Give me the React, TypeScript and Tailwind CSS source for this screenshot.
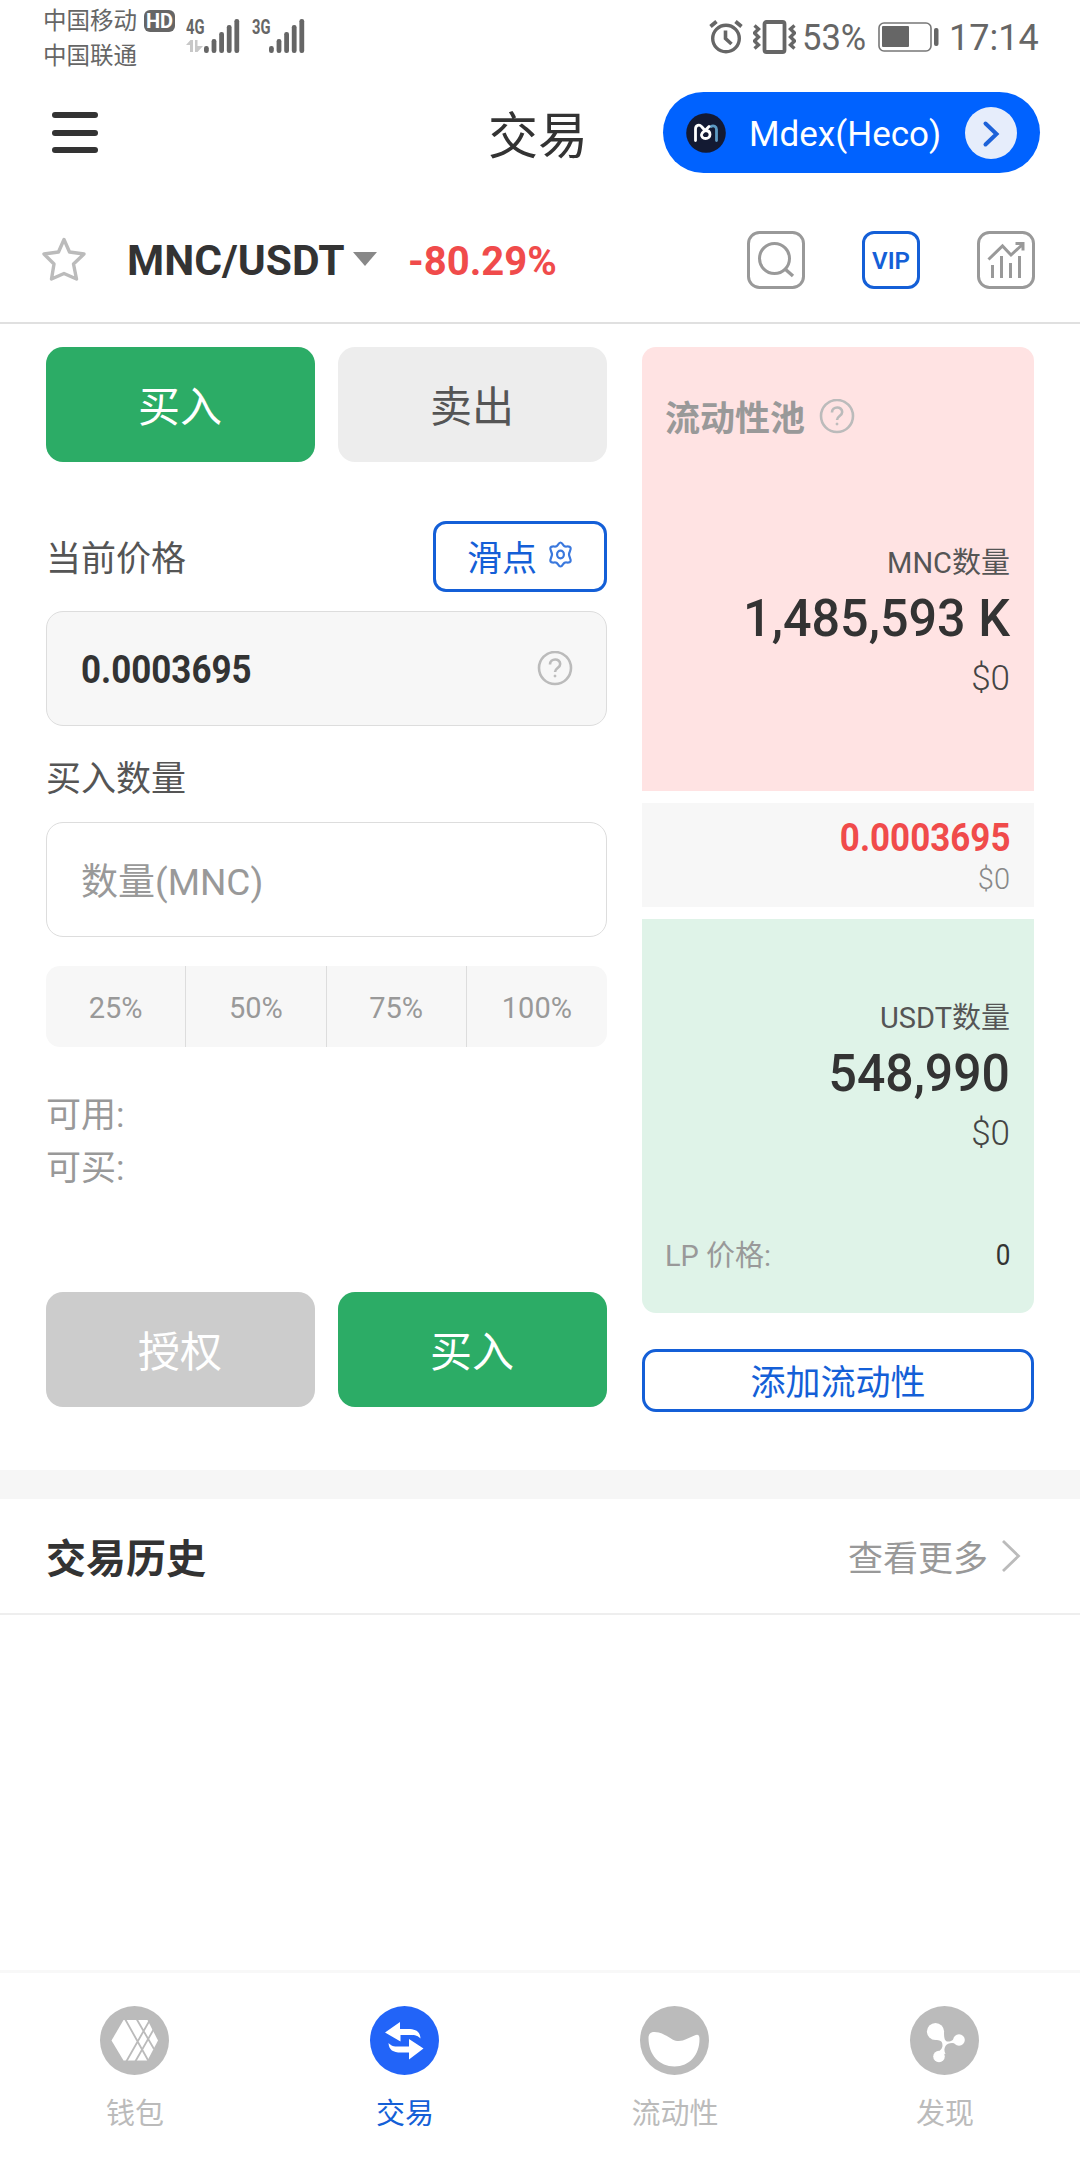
import React from "react";

function Signal() {
  return (
    <svg className="block" width="36" height="34" viewBox="0 0 36 34" fill="#666">
      <rect x="0" y="27" width="4.8" height="7" rx="2.2" />
      <rect x="7.6" y="20" width="4.8" height="14" rx="2.2" />
      <rect x="15.2" y="13" width="4.8" height="21" rx="2.2" />
      <rect x="22.8" y="6" width="4.8" height="28" rx="2.2" />
      <rect x="30.4" y="0" width="4.8" height="34" rx="2.2" />
    </svg>
  );
}

function StatusBar() {
  return (
    <div className="flex h-[72px] items-start pl-[43px] text-[#666]">
      <div className="w-[101px] pt-[4px] text-[23.5px] leading-[35px]">
        <div>中国移动</div>
        <div>中国联通</div>
      </div>
      <div className="mt-[10px] flex h-[22px] w-[31px] items-center justify-center rounded-[6px] bg-[#666] text-[20px] font-bold leading-none text-white">
        HD
      </div>
      <div className="ml-[11px] mt-[17px] w-[18px]">
        <div className="h-[22px] w-[26px] origin-left scale-x-[0.7] text-[21px] font-bold leading-[20px]">4G</div>
        <svg className="block" width="17" height="14" viewBox="0 0 17 14" fill="#c8c8c8">
          <path d="M0 6 4.500 1H7v12H4V6zM9 1h2.500v6H17l-5.500 6H9z" />
        </svg>
      </div>
      <div className="mt-[19px]"><Signal /></div>
      <div className="ml-[12px] mt-[17px] w-[17px]">
        <div className="w-[26px] origin-left scale-x-[0.7] text-[21px] font-bold leading-[20px]">3G</div>
      </div>
      <div className="mt-[19px]"><Signal /></div>
      <svg className="ml-[404px] mt-[19px] shrink-0" width="34" height="36" viewBox="0 0 34 36" fill="none" stroke="#666" strokeWidth="3.400">
        <circle cx="17" cy="19.500" r="13.300" />
        <path d="M16.500 11.500v8l6 5.500" strokeWidth="3.600" />
        <path d="M1.500 7.500l6-5M32.500 7.500l-6-5" strokeWidth="3.800" />
      </svg>
      <svg className="ml-[10px] mt-[19px] shrink-0" width="43" height="36" viewBox="0 0 43 36" fill="none" stroke="#666">
        <rect x="11.500" y="3" width="20" height="30" rx="2" strokeWidth="3.800" />
        <path d="M1.500 6.500l4 3.500-4 4 4 4-4 4 4 4-4 3.500M41.500 6.500l-4 3.500 4 4-4 4 4 4-4 4 4 3.500" strokeWidth="3.400" />
      </svg>
      <div className="ml-[6px] mt-[18px] w-[76px] text-[36px] leading-[40px]">
        <span className="inline-block origin-left scale-x-[0.96]">53%</span>
      </div>
      <svg className="mt-[22px] shrink-0" width="62" height="30" viewBox="0 0 62 30">
        <rect x="1" y="1" width="52" height="28" rx="5" fill="none" stroke="#777" strokeWidth="1.600" />
        <rect x="4" y="4" width="27" height="21" rx="1" fill="#666" />
        <rect x="56" y="6" width="4.500" height="18" rx="2" fill="#666" />
      </svg>
      <div className="ml-[9px] mt-[18px] text-[36px] leading-[40px]">17:14</div>
    </div>
  );
}

function Header() {
  return (
    <div className="flex h-[120px] items-start text-[#333]">
      <div className="ml-[52px] mt-10 flex w-[46px] flex-col gap-[11.500px]">
        <div className="h-[6px] rounded-full bg-[#333]" />
        <div className="h-[6px] rounded-full bg-[#333]" />
        <div className="h-[6px] rounded-full bg-[#333]" />
      </div>
      <div className="ml-[390px] mt-[35px] w-[175px] text-[50px] leading-[60px]">交易</div>
      <div className="mt-[20px] flex h-[81px] w-[377px] items-center rounded-full bg-[#0062ff]">
        <svg className="ml-[23px]" width="40" height="40" viewBox="0 0 40 40" fill="none" strokeWidth="2.800" strokeLinecap="round">
          <circle cx="20" cy="20" r="19.800" fill="#131a33" />
          <path d="M25 13.500c2.500-1.500 5.500 0 5.500 3v11" stroke="#5d9bc4" />
          <path d="M9.500 27.500V16c0-4 4-5 6-2.500l3.500 4" stroke="#fff" />
          <path d="M19 17.500c3 0 5 1.500 5 4s-2 4-4.500 4-4.500-2-4-4 3-3.500 5-5.500l2.500-2.500" stroke="#fff" />
        </svg>
        <div className="ml-[23px] w-[193px] pt-[4px] text-[35px] leading-[44px] text-white">Mdex(Heco)</div>
        <svg className="ml-[23px]" width="52" height="52" viewBox="0 0 52 52" fill="none">
          <circle cx="26" cy="26" r="26" fill="#e6edfb" />
          <path d="M20.500 16.500l11 10.500-11 10.500" stroke="#1d62d9" strokeWidth="4" strokeLinecap="round" />
        </svg>
      </div>
    </div>
  );
}

function PairBar() {
  return (
    <div className="flex h-[132px] items-start border-b-2 border-[#e0e0e0]">
      <svg className="ml-[41px] mt-[44px]" width="46" height="46" viewBox="0 0 46 46" fill="none" stroke="#bbb" strokeWidth="3.400" strokeLinejoin="round">
        <path d="M23 3.500l5.500 12.500 14.500 2-10.500 10 3 15L23 37.500l-12.500 5.500 2.500-15L3 18l14.500-2z" />
      </svg>
      <div className="ml-[40px] mt-[44px] w-[226px] whitespace-nowrap text-[42px] font-bold leading-[50px] text-[#333]">
        <span className="inline-block origin-left scale-x-[1.012]">MNC/USDT</span>
      </div>
      <svg className="mt-[60px]" width="24" height="14" viewBox="0 0 24 14" fill="#888"><path d="M0 0h24L12 14z" /></svg>
      <div className="ml-[31px] mt-[45px] w-[339px] text-[40px] font-bold leading-[50px] text-[#f04b4b]">
        <span className="inline-block origin-left">-80.29%</span>
      </div>
      <svg className="mt-[39px] shrink-0" width="58" height="58" viewBox="0 0 58 58" fill="none" stroke="#999" strokeWidth="3">
        <rect x="1.500" y="1.500" width="55" height="55" rx="11" />
        <circle cx="27.500" cy="27.500" r="15" />
        <path d="M38 38l8 7" strokeWidth="3.400" />
      </svg>
      <div className="ml-[57px] mt-[39px] flex h-[58px] w-[58px] shrink-0 items-center justify-center rounded-[12px] border-[3px] border-[#145fd7] pt-px text-[24px] font-semibold text-[#145fd7]">
        VIP
      </div>
      <svg className="ml-[57px] mt-[39px] shrink-0" width="58" height="58" viewBox="0 0 58 58" fill="none" stroke="#999" strokeWidth="3">
        <rect x="1.500" y="1.500" width="55" height="55" rx="11" />
        <path d="M11.500 28.500L25.500 15l8.500 9L46 13M38.500 12.500H46v7" />
        <path d="M15.500 34v13M24.500 25v22M33.500 32v15M42.500 25v22" />
      </svg>
    </div>
  );
}

function Help({ cls, color }: { cls: string; color: string }) {
  return (
    <svg className={cls} width="36" height="36" viewBox="0 0 36 36" fill="none" stroke={color} strokeWidth="2.600">
      <circle cx="18" cy="17" r="16" />
      <path d="M13 13.500c0-6.500 10.200-6.500 10.200-.5 0 4-5.200 4-5.200 8" />
      <circle cx="18" cy="25" r="1" fill={color} strokeWidth="1" />
    </svg>
  );
}

function BigButton({ label, cls }: { label: string; cls: string }) {
  return (
    <button className={"flex h-[115px] w-[269px] items-center justify-center rounded-[17px] pt-[6px] pr-px text-[42px] " + cls}>
      <span className="leading-[60px]">{label}</span>
    </button>
  );
}

function OrderForm() {
  return (
    <div className="w-[561px]">
      <div className="flex justify-between">
        <BigButton label="买入" cls="bg-[#2cac66] text-white" />
        <BigButton label="卖出" cls="bg-[#ededed] text-[#555]" />
      </div>
      <div className="mt-[59px] flex h-[71px] items-center justify-between">
        <div className="pt-[7px] text-[35px] leading-[50px] text-[#555]">当前价格</div>
        <div className="flex h-[71px] w-[174px] items-center rounded-[13px] border-[3px] border-[#145fd7] pl-[31px] text-[35px] leading-[50px] text-[#145fd7]">
          <span className="pt-[7px]">滑点</span>
          <svg className="mb-[3px] ml-[11px]" width="25" height="28" viewBox="0 0 25 28" fill="none" stroke="#3a78dd" strokeWidth="2.200" strokeLinejoin="round">
            <path d="M12.500 1.500c2 0 2.500 3 4 3.800s5-.8 6 1.200-1.500 4.500-1.500 7 2.500 5 1.500 7-4.500.4-6 1.200-2 3.800-4 3.800-2.500-3-4-3.800-5 .8-6-1.200 1.500-4.500 1.500-7-2.500-5-1.500-7 4.500-.4 6-1.200 2-3.800 4-3.800z" />
            <ellipse cx="12.500" cy="13.500" rx="3.400" ry="3.800" />
          </svg>
        </div>
      </div>
      <div className="mt-[19px] flex h-[115px] items-center justify-between rounded-[17px] border border-[#ddd] bg-[#f7f7f7] pl-[34px] pr-[33px]">
        <div className="pt-[2px] text-[38px] font-bold leading-[50px] text-[#333]">
          <span className="inline-block origin-left scale-x-[0.92]">0.0003695</span>
        </div>
        <Help cls="" color="#bbb" />
      </div>
      <div className="mt-[29px] text-[35px] leading-[50px] text-[#555]">买入数量</div>
      <div className="mt-[17px] flex h-[115px] items-center rounded-[17px] border border-[#ddd] pl-[34px] pt-[6px] text-[37px] leading-[50px] text-[#999]">
        数量(MNC)
      </div>
      <div className="mt-[29px] grid h-[81px] grid-cols-4 divide-x divide-[#ddd] overflow-hidden rounded-[14px] bg-[#f7f7f7] text-[29px] text-[#999]">
        {["25%", "50%", "75%", "100%"].map((p) => (
          <div key={p} className="flex items-center justify-center pt-1">{p}</div>
        ))}
      </div>
      <div className="mt-[42px] text-[35px] leading-[53px] text-[#999]">
        <div>可用:</div>
        <div>可买:</div>
      </div>
      <div className="mt-[97px] flex justify-between">
        <BigButton label="授权" cls="bg-[#ccc] text-white" />
        <BigButton label="买入" cls="bg-[#2cac66] text-white" />
      </div>
    </div>
  );
}

function Pool() {
  return (
    <div className="ml-[35px] w-[392px] text-right">
      <div className="h-[444px] rounded-t-[14px] bg-[#ffe3e3] px-6 pt-[44px]">
        <div className="-ml-px flex h-[52px] items-center text-[35px] font-bold leading-[50px] text-[#999]">
          <span className="pt-[5px]">流动性池</span>
          <Help cls="ml-[14px]" color="#bbb" />
        </div>
        <div className="mt-[100px] text-[29px] leading-[40px] text-[#555]">MNC数量</div>
        <div className="mt-[5px] h-[62px] text-[52px] font-medium leading-[62px] text-[#333]">
          <span className="inline-block origin-right scale-x-[0.967] whitespace-nowrap">1,485,593 K</span>
        </div>
        <div className="mt-[7px] text-[35px] font-light leading-[44px] text-[#444]">$0</div>
      </div>
      <div className="mt-[12px] h-[104px] bg-[#f7f7f7] px-6 pt-[12px]">
        <div className="text-[38px] font-bold leading-[46px] text-[#f04b4b]">
          <span className="inline-block origin-right scale-x-[0.92]">0.0003695</span>
        </div>
        <div className="text-[29px] font-light leading-[36px] text-[#888]">$0</div>
      </div>
      <div className="mt-[12px] h-[394px] rounded-b-[14px] bg-[#dff3e8] px-6 pt-[79px]">
        <div className="text-[29px] leading-[40px] text-[#555]">USDT数量</div>
        <div className="mt-[5px] h-[62px] text-[52px] font-medium leading-[62px] text-[#333]">
          <span className="inline-block origin-right scale-x-[0.96]">548,990</span>
        </div>
        <div className="mt-[7px] text-[35px] font-light leading-[44px] text-[#444]">$0</div>
        <div className="-ml-px mt-[80px] flex justify-between text-[29px] leading-[40px]">
          <div className="text-[#999]">LP 价格:</div>
          <div className="origin-right scale-x-[0.9] text-[29px] leading-[38px] text-[#333]">0</div>
        </div>
      </div>
      <div className="mt-[36px] flex h-[63px] items-center justify-center rounded-[14px] border-[3px] border-[#145fd7] pt-[6px] text-[35px] leading-[50px] text-[#145fd7]">
        添加流动性
      </div>
    </div>
  );
}

function TabItem({ label, active, children }: { label: string; active?: boolean; children: React.ReactNode }) {
  return (
    <div className="flex flex-col items-center pt-[33px]">
      <svg width="70" height="70" viewBox="0 0 70 70">
        <circle cx="34.500" cy="34.500" r="34.500" fill={active ? "#2264f8" : "#bbb"} />
        {children}
      </svg>
      <div className={active ? "mt-[18px] text-[29px] leading-[40px] text-[#145fd7]" : "mt-[18px] text-[29px] leading-[40px] text-[#bbb]"}>
        {label}
      </div>
    </div>
  );
}

function TabBar() {
  return (
    <div className="grid h-[190px] grid-cols-4 border-t-[3px] border-[#f8f8f8]">
      <TabItem label="钱包">
        <path d="M23.500 14h24l10.500 20.500-10.500 20h-24L11.500 34.500z" fill="#fff" />
        <path d="M24.500 12l24 43M36 12l18 31M51 12L26 56M55 21L35 56" stroke="#bbb" strokeWidth="1.800" />
      </TabItem>
      <TabItem label="交易" active>
        <path d="M15 26.500L30 16v7h8c8 0 12 2.500 12.500 9.500-3-3-5-3.500-10-3.500H30.500v6.500z" fill="#fff" />
        <path d="M53.500 42.500L39 53.500v-7h-8c-8 0-12-2.500-12.500-9.500 3 3 5 3.500 10 3.500H39V33z" fill="#fff" />
      </TabItem>
      <TabItem label="流动性">
        <path d="M8.500 32c0-4 2-6 6-6 7 0 13 4.500 18 7.500 5 2.500 10 1.500 14-.5l8-3.500c3.500-1.500 5-.5 5 3.500 0 16-10 27.500-25 27.500S8.500 49 8.500 32z" fill="#fff" />
      </TabItem>
      <TabItem label="发现">
        <g fill="#fff">
          <circle cx="25.500" cy="25.500" r="8.600" />
          <circle cx="49" cy="34" r="5.800" />
          <circle cx="29" cy="50.500" r="5.800" />
          <path d="M34 26c0 7 1 9.500 4 9.500 4 0 5-2 8-5v7.500c-3-2-9-1-10.500 2s-1.500 4.500 0 8l-9-1c3-2 6-4 6-7.500 0-5-3-5.500-7-5.500z" />
        </g>
      </TabItem>
    </div>
  );
}

export default function App() {
  return (
    <div className="flex h-[2160px] w-[1080px] flex-col overflow-hidden bg-white font-['Roboto','Noto_Sans_CJK_SC',sans-serif]" lang="zh-CN">
      <StatusBar />
      <Header />
      <PairBar />
      <div className="flex h-[1146px] pl-[46px] pt-[23px]">
        <OrderForm />
        <Pool />
      </div>
      <div className="h-[29px] bg-[#f6f6f6]" />
      <div className="flex h-[116px] items-center justify-between border-b-2 border-[#eee] pl-[46px] pr-[59px]">
        <div className="pt-[7px] text-[40px] font-bold leading-[60px] text-[#333]">交易历史</div>
        <div className="flex items-center text-[35px] leading-[50px] text-[#999]">
          <span className="pt-[7px]">查看更多</span>
          <svg className="ml-[12px]" width="21" height="34" viewBox="0 0 21 34" fill="none" stroke="#bbb" strokeWidth="2.800">
            <path d="M3 2l15.500 15L3 32" />
          </svg>
        </div>
      </div>
      <div className="flex-1" />
      <TabBar />
    </div>
  );
}
